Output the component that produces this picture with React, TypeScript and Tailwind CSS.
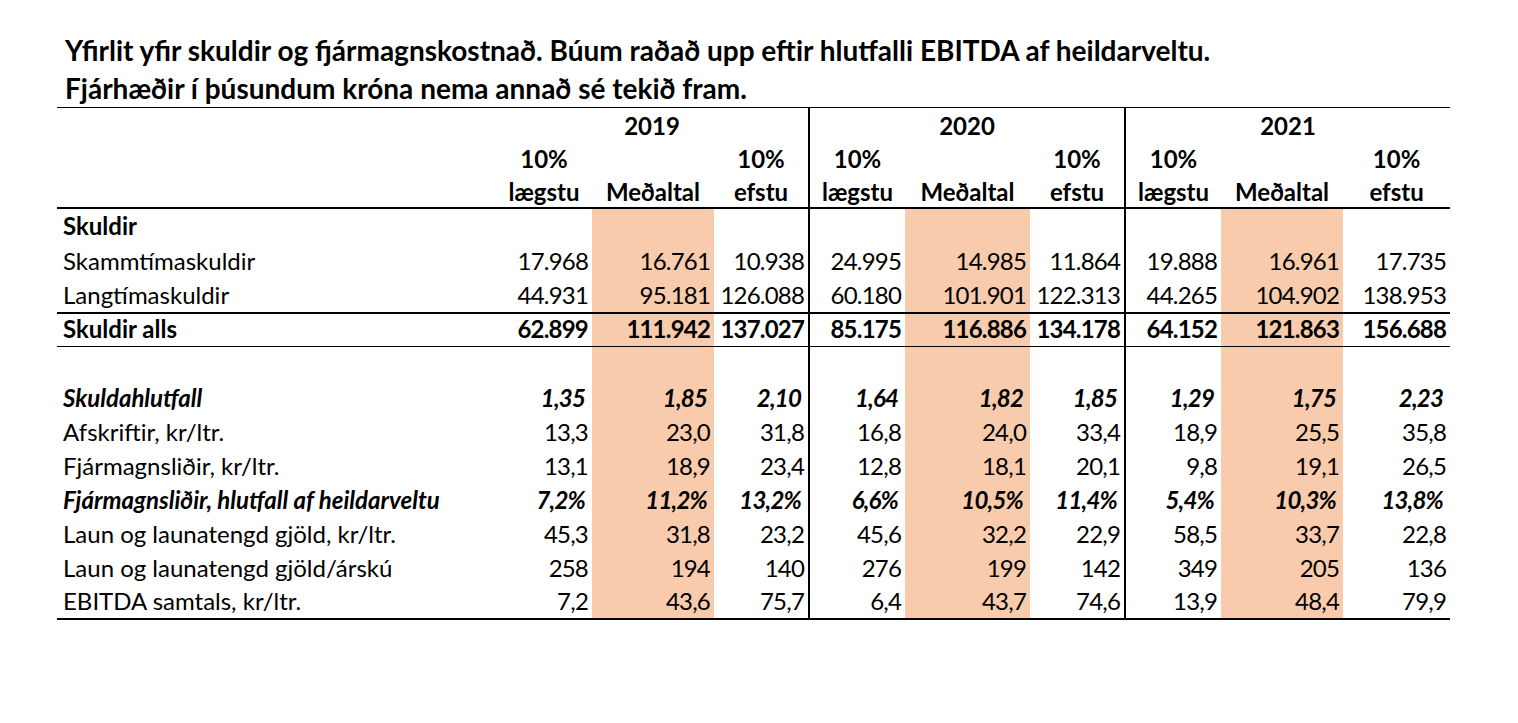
const YEARS = ["2019", "2020", "2021"];

type Row = {
  label: string;
  values: string[];
  kind: "normal" | "bold" | "italic" | "section" | "blank";
  rule?: boolean;
};

const ROWS: Row[] = [
  { label: "Skuldir", values: [], kind: "section" },
  {
    label: "Skammtímaskuldir",
    values: ["17.968", "16.761", "10.938", "24.995", "14.985", "11.864", "19.888", "16.961", "17.735"],
    kind: "normal",
  },
  {
    label: "Langtímaskuldir",
    values: ["44.931", "95.181", "126.088", "60.180", "101.901", "122.313", "44.265", "104.902", "138.953"],
    kind: "normal",
  },
  {
    label: "Skuldir alls",
    values: ["62.899", "111.942", "137.027", "85.175", "116.886", "134.178", "64.152", "121.863", "156.688"],
    kind: "bold",
    rule: true,
  },
  { label: "", values: [], kind: "blank" },
  {
    label: "Skuldahlutfall",
    values: ["1,35", "1,85", "2,10", "1,64", "1,82", "1,85", "1,29", "1,75", "2,23"],
    kind: "italic",
  },
  {
    label: "Afskriftir, kr/ltr.",
    values: ["13,3", "23,0", "31,8", "16,8", "24,0", "33,4", "18,9", "25,5", "35,8"],
    kind: "normal",
  },
  {
    label: "Fjármagnsliðir, kr/ltr.",
    values: ["13,1", "18,9", "23,4", "12,8", "18,1", "20,1", "9,8", "19,1", "26,5"],
    kind: "normal",
  },
  {
    label: "Fjármagnsliðir, hlutfall af heildarveltu",
    values: ["7,2%", "11,2%", "13,2%", "6,6%", "10,5%", "11,4%", "5,4%", "10,3%", "13,8%"],
    kind: "italic",
  },
  {
    label: "Laun og launatengd gjöld, kr/ltr.",
    values: ["45,3", "31,8", "23,2", "45,6", "32,2", "22,9", "58,5", "33,7", "22,8"],
    kind: "normal",
  },
  {
    label: "Laun og launatengd gjöld/árskú",
    values: ["258", "194", "140", "276", "199", "142", "349", "205", "136"],
    kind: "normal",
  },
  {
    label: "EBITDA samtals, kr/ltr.",
    values: ["7,2", "43,6", "75,7", "6,4", "43,7", "74,6", "13,9", "48,4", "79,9"],
    kind: "normal",
  },
];

const WIDTHS = ["w-[439px]", "w-[96px]", "w-[122px]", "w-[95px]", "w-[96px]", "w-[125px]", "w-[95px]", "w-[96px]", "w-[122px]", "w-[107px]"];

// column index (0..8): middle column is the shaded average, dividers after each year
const isMid = (i: number) => i % 3 === 1;
const hasDivider = (i: number) => i === 2 || i === 5;

function rowText(kind: Row["kind"]) {
  if (kind === "bold" || kind === "section") return "font-bold";
  if (kind === "italic") return "font-bold italic";
  return "";
}

export default function App() {
  return (
    <div className="min-h-[723px] bg-white pt-[31px] pl-[57px] text-black" style={{ fontFamily: "Lato, 'Noto Sans', sans-serif" }}>
      <div className="pl-[8px] text-[28px] font-bold leading-[38px]">
        <div>Yfirlit yfir skuldir og fjármagnskostnað. Búum raðað upp eftir hlutfalli EBITDA af heildarveltu.</div>
        <div>Fjárhæðir í þúsundum króna nema annað sé tekið fram.</div>
      </div>
      <table className="w-[1393px] table-fixed border-collapse text-[24px]">
        <colgroup>
          {WIDTHS.map((w, i) => (
            <col key={i} className={w} />
          ))}
        </colgroup>
        <thead className="font-bold">
          <tr className="h-[33px] border-t border-black">
            <th />
            {YEARS.map((y, k) => (
              <th
                key={y}
                colSpan={3}
                className={`pb-[1px] text-center align-bottom leading-[28px] ${k < 2 ? "border-r-2 border-black" : ""}`}
              >
                {y}
              </th>
            ))}
          </tr>
          <tr className="h-[34px]">
            <th />
            {Array.from({ length: 9 }).map((_, i) => (
              <th
                key={i}
                className={`pb-[2px] text-center align-bottom leading-[28px] ${hasDivider(i) ? "border-r-2 border-black" : ""}`}
              >
                {isMid(i) ? "" : "10%"}
              </th>
            ))}
          </tr>
          <tr className="h-[33px] border-b-2 border-black">
            <th />
            {Array.from({ length: 9 }).map((_, i) => (
              <th
                key={i}
                className={`pb-[1px] text-center align-bottom leading-[28px] ${hasDivider(i) ? "border-r-2 border-black" : ""}`}
              >
                {i % 3 === 0 ? "lægstu" : isMid(i) ? "Meðaltal" : "efstu"}
              </th>
            ))}
          </tr>
        </thead>
        <tbody>
          {ROWS.map((r, ri) => (
            <tr
              key={ri}
              className={`${ri < 3 ? "h-[35px]" : "h-[34px]"} ${r.rule ? "border-t-2 border-b border-black" : ""} ${
                ri === ROWS.length - 1 ? "border-b-2 border-black" : ""
              } ${rowText(r.kind)}`}
            >
              <td className="whitespace-nowrap pb-[3px] pl-[6px] text-left align-bottom leading-[28px]">{r.label}</td>
              {Array.from({ length: 9 }).map((_, i) => (
                <td
                  key={i}
                  className={`whitespace-nowrap pb-[3px] text-right align-bottom leading-[28px] tracking-[-0.8px] ${
                    r.kind === "italic" ? "pr-[7px]" : "pr-[4px]"
                  } ${isMid(i) ? "bg-[#f8cbad]" : ""} ${hasDivider(i) ? "border-r-2 border-black" : ""}`}
                >
                  {r.values[i] ?? ""}
                </td>
              ))}
            </tr>
          ))}
        </tbody>
      </table>
    </div>
  );
}
